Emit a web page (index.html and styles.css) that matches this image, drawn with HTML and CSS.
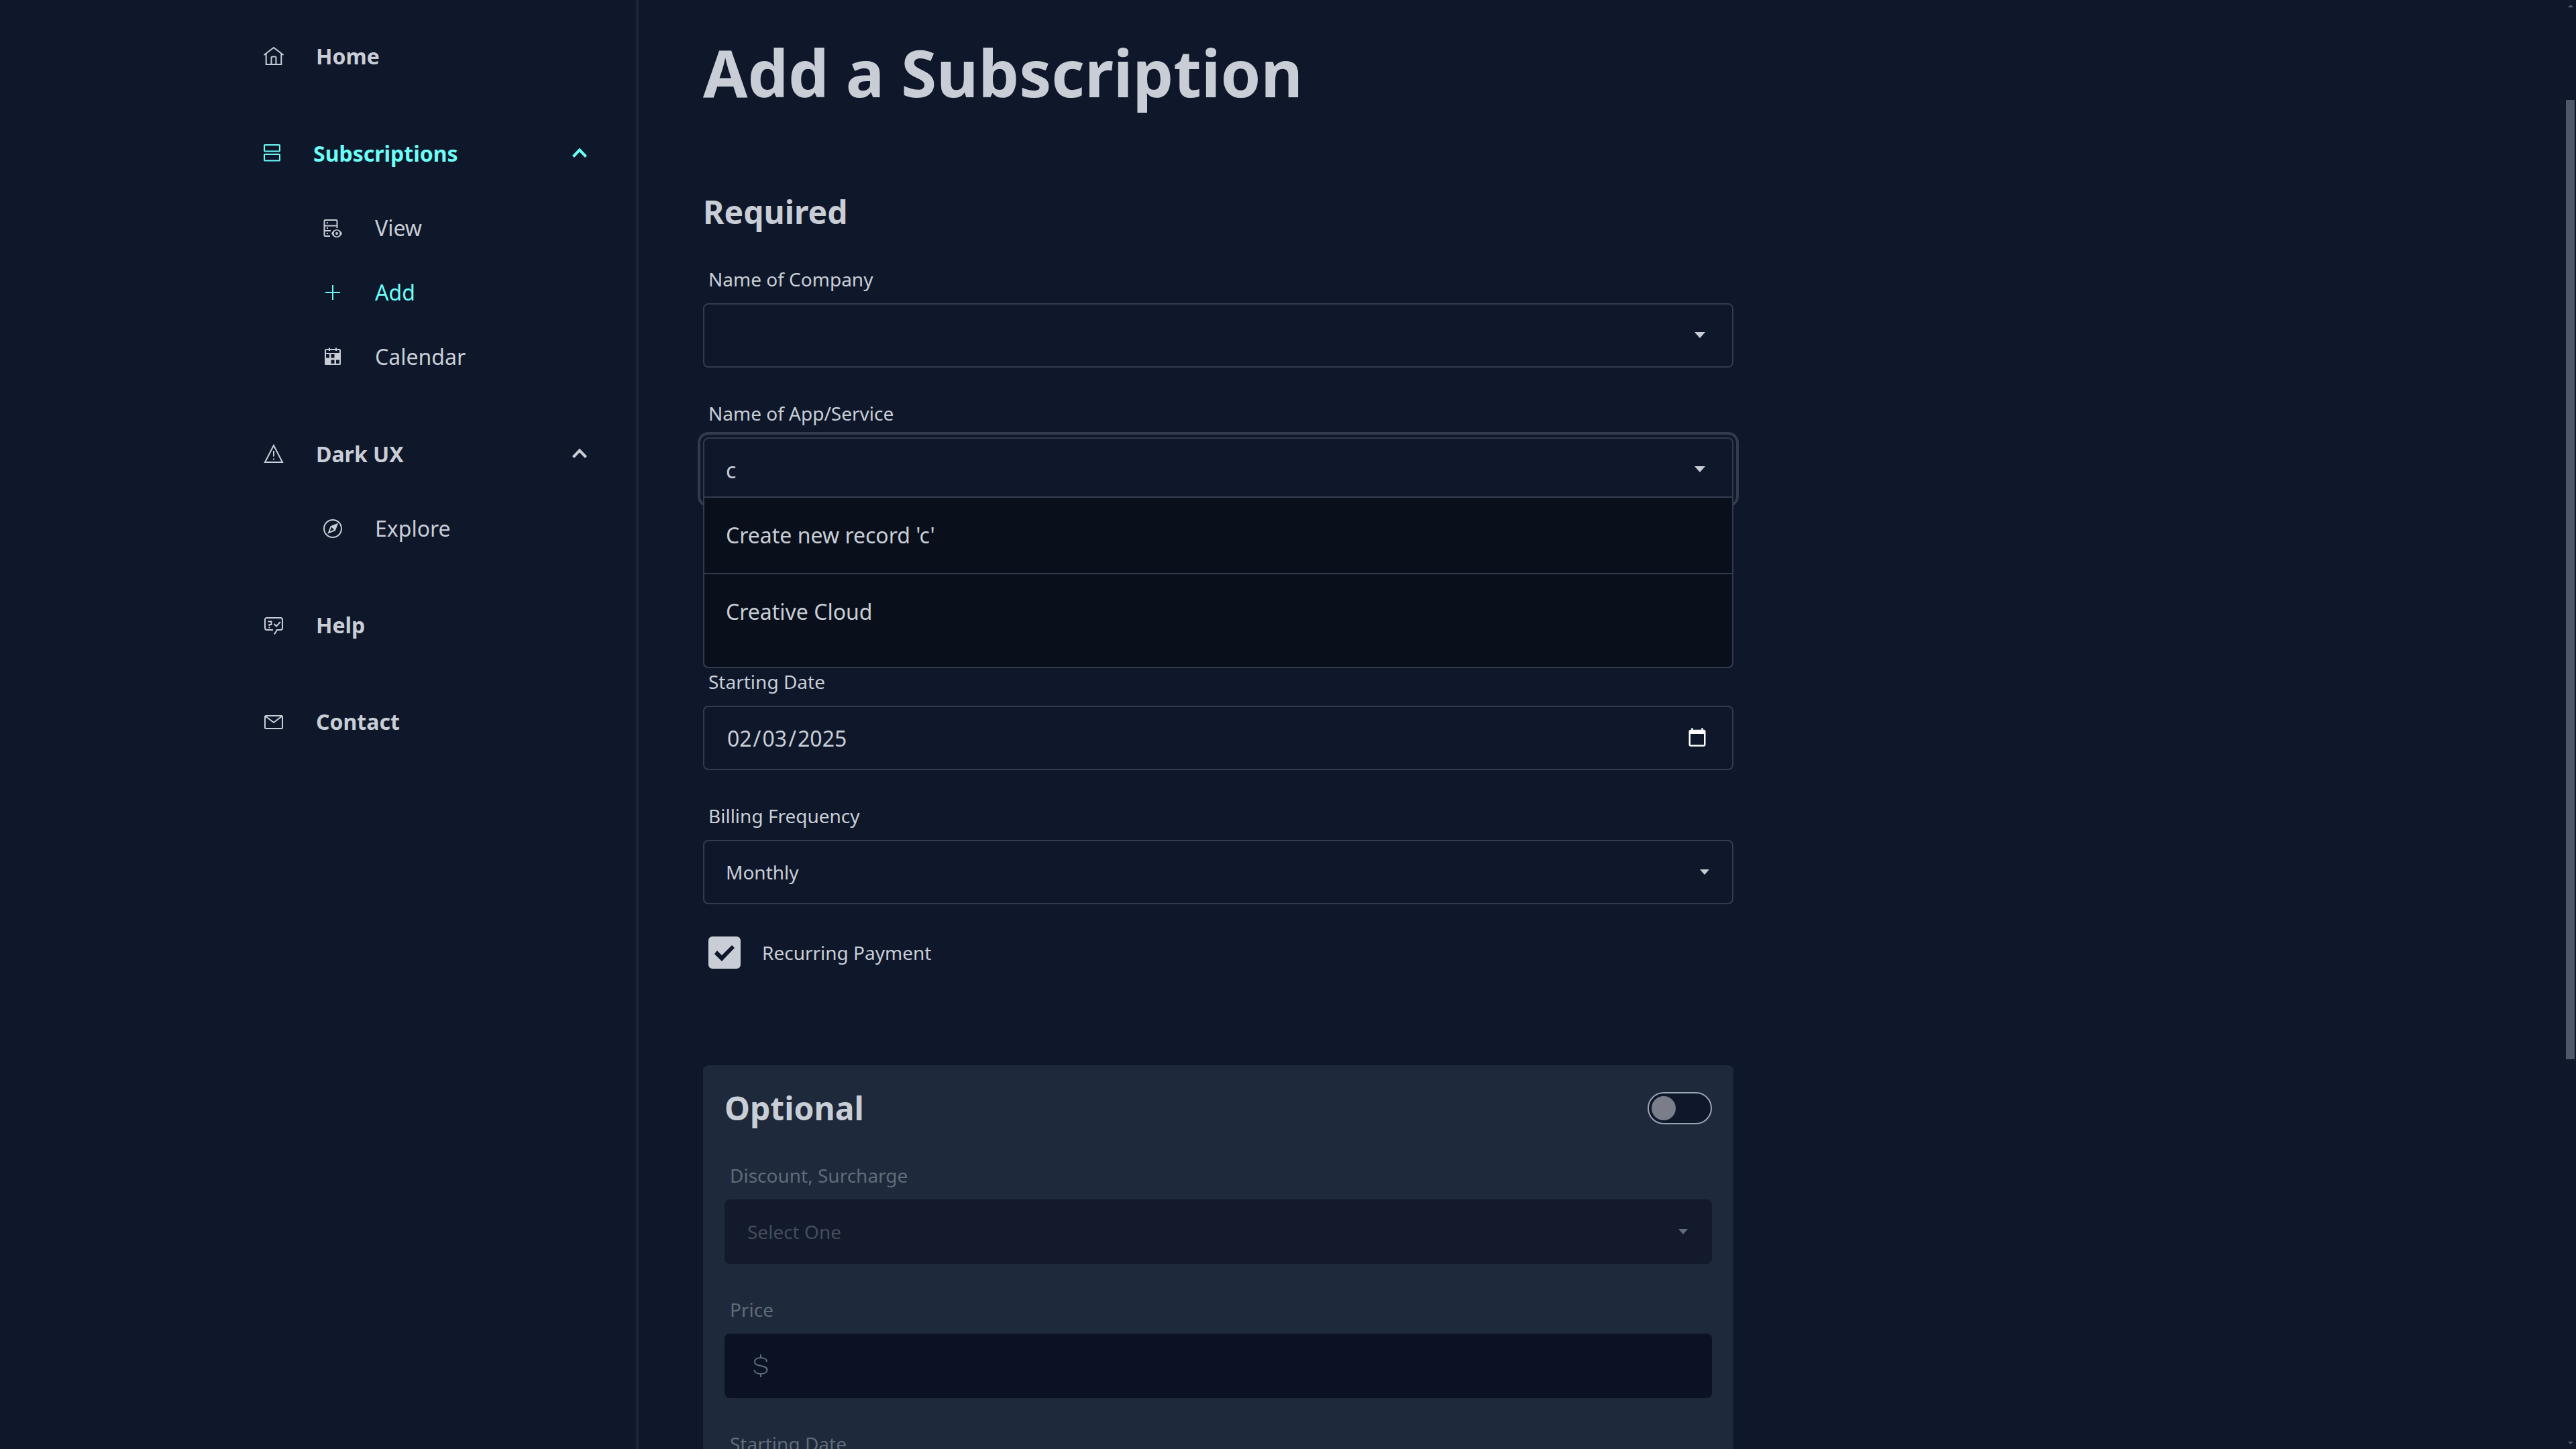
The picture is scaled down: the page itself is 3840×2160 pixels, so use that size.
FILE: index.html
```html
<!DOCTYPE html>
<html lang="en">
<head>
<meta charset="utf-8">
<meta name="viewport" content="width=device-width, initial-scale=1">
<title>Add a Subscription</title>
<link rel="stylesheet" href="styles.css">
</head>
<body>
<div class="app">
  <nav class="sidebar" aria-label="Main">
    <ul class="nav">
      <li>
        <a class="nav-item" href="#home">
          <svg class="icon" viewBox="0 0 32 32" aria-hidden="true"><path d="M1.5 14 16 3l14.500 11M4.700 12v16H27.300V12M12.500 28V18q0-1.500 1.500-1.500h4q1.500 0 1.500 1.500v10"/></svg>
          <span>Home</span>
        </a>
      </li>
      <li>
        <button class="nav-item active" type="button" aria-expanded="true">
          <svg class="icon icon-small" viewBox="0 0 28 28" aria-hidden="true"><rect x="2" y="2" width="23" height="9.500" rx="1"/><rect x="2" y="16" width="23" height="9.500" rx="1"/></svg>
          <span>Subscriptions</span>
          <svg class="chevron" viewBox="0 0 32 32" aria-hidden="true"><path d="m6.500 21.500 9.500-10 9.500 10"/></svg>
        </button>
        <ul class="subnav">
          <li><a class="nav-item" href="#view">
            <svg class="icon" viewBox="0 0 32 32" aria-hidden="true"><path d="M12 28H5q-1.500 0-1.500-1.500v-21Q3.500 4 5 4h16q1.500 0 1.500 1.500V16M3.500 12.500h19M3.500 20H13"/><path class="solid" d="M7 7.200h2v2H7zM7 15h2v2H7zM7 23h2v2H7z"/><path class="solid" fill-rule="evenodd" d="M14 24q3-6 8-6t8 6q-3 6-8 6t-8-6Zm3.500 0a4.500 4.500 0 0 0 9 0 4.500 4.500 0 0 0-9 0Zm2.500 0a2 2 0 0 1 4 0 2 2 0 0 1-4 0Z"/></svg>
            <span>View</span></a></li>
          <li><a class="nav-item active" href="#add" aria-current="page">
            <svg class="icon" viewBox="0 0 32 32" aria-hidden="true"><path d="M16 5v22M5 16h22"/></svg>
            <span>Add</span></a></li>
          <li><a class="nav-item" href="#calendar">
            <svg class="icon" viewBox="0 0 32 32" aria-hidden="true"><path d="M11 2.500V7M21 2.500V7M5 11V6.500Q5 5 6.500 5h19Q27 5 27 6.500V11"/><path class="solid" fill-rule="evenodd" d="M4 10h24v16.500q0 1.500-1.500 1.500h-21Q4 28 4 26.500ZM6 12v5.500h5V12Zm7.500 0v5.500h5V12Zm0 8.500V26h5v-5.500Zm7.500 0V26h5v-5.500Z"/></svg>
            <span>Calendar</span></a></li>
        </ul>
      </li>
      <li>
        <button class="nav-item" type="button" aria-expanded="true">
          <svg class="icon" viewBox="0 0 32 32" aria-hidden="true"><path d="M16 4 29 29H3ZM16 12v8.500M16 23.500v2"/></svg>
          <span>Dark UX</span>
          <svg class="chevron" viewBox="0 0 32 32" aria-hidden="true"><path d="m6.500 21.500 9.500-10 9.500 10"/></svg>
        </button>
        <ul class="subnav">
          <li><a class="nav-item" href="#explore">
            <svg class="icon" viewBox="0 0 32 32" aria-hidden="true"><circle cx="16" cy="16" r="13"/><path d="M22.500 9.500 13.500 13 10 22l9-3.500Z"/><path class="solid" d="m23 9-9.500 4 5.500 6Z"/></svg>
            <span>Explore</span></a></li>
        </ul>
      </li>
      <li>
        <a class="nav-item" href="#help">
          <svg class="icon" viewBox="0 0 32 32" aria-hidden="true"><path d="M15 23H6q-3 0-3-3V8q0-3 3-3h20q3 0 3 3v12q0 3-3 3h-5l-4 6.500"/><path d="M7.500 10.500h5v4.500h-3v2.500M9.500 19v1.500M16.500 14l3.500 3.500 6-6.500"/></svg>
          <span>Help</span>
        </a>
      </li>
      <li>
        <a class="nav-item" href="#contact">
          <svg class="icon" viewBox="0 0 32 32" aria-hidden="true"><rect x="3" y="7" width="26" height="19" rx="1.500"/><path d="m3.500 7.500 12.500 9.500 12.500-9.500"/></svg>
          <span>Contact</span>
        </a>
      </li>
    </ul>
  </nav>

  <main class="content">
    <form class="form">
      <h1 class="title">Add a Subscription</h1>

      <section class="fields">
        <h2 class="heading">Required</h2>

        <div class="field">
          <label class="label" for="company">Name of Company</label>
          <div class="control combo">
            <input class="combo-input" id="company" type="text" autocomplete="off">
            <button class="combo-toggle" type="button" aria-label="Show companies">
              <svg class="caret-large" viewBox="0 0 16 10" aria-hidden="true"><path d="M0 0h16L8 9z"/></svg>
            </button>
          </div>
        </div>

        <div class="field">
          <label class="label" for="service">Name of App/Service</label>
          <div class="control combo open">
            <input class="combo-input" id="service" type="text" value="c" autocomplete="off" role="combobox" aria-expanded="true" aria-controls="service-options">
            <button class="combo-toggle" type="button" aria-label="Show services">
              <svg class="caret-large" viewBox="0 0 16 10" aria-hidden="true"><path d="M0 0h16L8 9z"/></svg>
            </button>
            <ul class="options" id="service-options" role="listbox">
              <li class="option" role="option">Create new record 'c'</li>
              <li class="option" role="option">Creative Cloud</li>
            </ul>
          </div>
        </div>

        <div class="field covered">
          <label class="label" for="price">Price</label>
          <input class="control input" id="price" type="text">
        </div>

        <div class="field">
          <label class="label" for="start">Starting Date</label>
          <input class="control input" id="start" type="date" value="2025-02-03">
        </div>

        <div class="field">
          <label class="label" for="frequency">Billing Frequency</label>
          <div class="select-wrap">
            <select class="control select" id="frequency"><option>Monthly</option><option>Yearly</option></select>
            <svg class="caret" viewBox="0 0 14 8" aria-hidden="true"><path d="M0 0h14L7 8z"/></svg>
          </div>
        </div>

        <div class="check-row">
          <input class="check" id="recurring" type="checkbox" checked>
          <label class="check-label" for="recurring">Recurring Payment</label>
        </div>
      </section>

      <section class="fields card">
        <div class="card-head">
          <h2 class="heading" id="optional-title">Optional</h2>
          <input class="switch" type="checkbox" role="switch" aria-labelledby="optional-title">
        </div>

        <div class="field off">
          <label class="label" for="discount">Discount, Surcharge</label>
          <div class="select-wrap">
            <select class="control select" id="discount" disabled><option>Select One</option></select>
            <svg class="caret" viewBox="0 0 14 8" aria-hidden="true"><path d="M0 0h14L7 8z"/></svg>
          </div>
        </div>

        <div class="field off">
          <label class="label" for="discount-price">Price</label>
          <div class="control money">
            <svg class="dollar" viewBox="0 0 40 40" aria-hidden="true"><path d="M20 3v5M20 32v5M29 14c0-4-4-6-9-6s-9 2-9 6 3.500 5 9 6 9.500 2 9.500 6-4.500 6-9.500 6-9.500-2-9.500-6"/></svg>
            <input class="combo-input" id="discount-price" type="text" disabled>
          </div>
        </div>

        <div class="field off">
          <label class="label" for="discount-start">Starting Date</label>
          <input class="control input" id="discount-start" type="date" disabled>
        </div>
      </section>
    </form>
  </main>
</div>

<div class="scrollbar" aria-hidden="true">
  <svg class="scroll-arrow" viewBox="0 0 8 4"><path d="M0 4h8L4 0z"/></svg>
  <div class="scroll-track"><div class="scroll-thumb"></div></div>
  <svg class="scroll-arrow" viewBox="0 0 8 4"><path d="M0 0h8L4 4z"/></svg>
</div>
</body>
</html>
```
FILE: styles.css
```css
:root {
  --bg: #0f172a;
  --text: #c9ced6;
  --line: #333c4f;
  --accent: #6bfff8;
  color-scheme: dark;
}

* {
  box-sizing: border-box;
}

body {
  margin: 0;
  background: var(--bg);
  color: var(--text);
  font-family: "Noto Sans", sans-serif;
  font-size: 32px;
  line-height: 48px;
}

h1, h2, ul {
  margin: 0;
  padding: 0;
  font-weight: 700;
}

ul {
  list-style: none;
}

input, select, button {
  margin: 0;
  color: inherit;
  font-family: inherit;
}

.app {
  display: grid;
  grid-template-columns: 952px minmax(0, 1fr);
  height: 100vh;
  overflow: hidden;
}

/* Sidebar */

.sidebar {
  padding: 36px 68px 36px 392px;
  border-right: 4px solid #1c2638;
}

.nav {
  display: grid;
  gap: 48px;
}

.nav-item {
  display: flex;
  align-items: center;
  gap: 47px;
  width: 100%;
  height: 96px;
  padding: 0;
  border: 0;
  background: none;
  color: var(--text);
  font-size: 32px;
  font-weight: 700;
  text-decoration: none;
}

.nav-item.active {
  color: var(--accent);
}

.subnav {
  padding: 16px 0 0 88px;
}

.subnav .nav-item {
  font-weight: 400;
}

.icon {
  flex: none;
  width: 32px;
  height: 32px;
  fill: none;
  stroke: currentColor;
  stroke-width: 2;
}

.icon-small {
  width: 28px;
  height: 28px;
}

.icon .solid {
  fill: currentColor;
  stroke: none;
}

.chevron {
  width: 32px;
  height: 32px;
  margin-left: auto;
  fill: none;
  stroke: currentColor;
  stroke-width: 4;
}

/* Form */

.content {
  padding: 60px 96px;
}

.form {
  max-width: 1536px;
}

.title {
  margin-bottom: 128px;
  font-size: 96px;
  line-height: 96px;
}

.heading {
  font-size: 48px;
  line-height: 64px;
}

.fields {
  display: grid;
  gap: 48px;
}

.field {
  display: grid;
  gap: 16px;
}

/* Sits under the open list of options */
.covered {
  visibility: hidden;
}

.label, .check-label {
  font-size: 28px;
  line-height: 40px;
}

.label {
  padding: 0 8px;
}

.control {
  width: 100%;
  height: 96px;
  border: 2px solid var(--line);
  border-radius: 8px;
  background: var(--bg);
  font-size: 32px;
}

.input {
  padding: 0 34px 0 32px;
}

.input::-webkit-datetime-edit-month-field,
.input::-webkit-datetime-edit-day-field,
.input::-webkit-datetime-edit-year-field {
  padding: 0 2px;
}

.combo {
  position: relative;
  display: flex;
  align-items: center;
}

.combo.open {
  outline: 4px solid var(--line);
  outline-offset: 4px;
}

.combo-input {
  flex: 1;
  min-width: 0;
  padding: 0 0 0 32px;
  border: 0;
  outline: 0;
  background: none;
  font-size: 32px;
}

.combo-toggle {
  display: flex;
  align-items: center;
  justify-content: center;
  width: 96px;
  height: 92px;
  padding: 0;
  border: 0;
  background: none;
}

.caret-large {
  width: 16px;
  height: 10px;
  fill: currentColor;
}

.options {
  position: absolute;
  z-index: 2;
  top: 86px;
  left: -2px;
  right: -2px;
  padding-bottom: 26px;
  border: 2px solid var(--line);
  border-radius: 0 0 8px 8px;
  background: #09101c;
  font-weight: 400;
}

.option {
  padding: 32px;
}

.option + .option {
  border-top: 2px solid var(--line);
}

.select-wrap {
  display: grid;
  align-items: center;
}

.select-wrap > * {
  grid-area: 1 / 1;
}

.select {
  appearance: none;
  padding: 0 32px;
  font-size: 28px;
}

.caret {
  justify-self: end;
  width: 14px;
  height: 8px;
  margin-right: 36px;
  fill: currentColor;
  pointer-events: none;
}

.check-row {
  display: flex;
  align-items: center;
  gap: 32px;
  padding: 0 8px;
}

.check {
  appearance: none;
  width: 48px;
  height: 48px;
  border-radius: 6px;
  background: var(--text);
}

.check:checked::before {
  content: "";
  display: block;
  width: 48px;
  height: 48px;
  background: var(--bg);
  clip-path: polygon(9px 26px, 13px 21px, 20px 28px, 35px 13px, 39px 17px, 20px 37px);
}

/* Optional card */

.card {
  margin-top: 144px;
  padding: 32px;
  border-radius: 8px;
  background: #1e293b;
}

.card-head {
  display: flex;
  align-items: center;
  justify-content: space-between;
}

.switch {
  appearance: none;
  width: 96px;
  height: 48px;
  padding: 4px;
  border: 2px solid #9aa3b2;
  border-radius: 24px;
  background: var(--bg);
}

.switch::before {
  content: "";
  display: block;
  width: 36px;
  height: 36px;
  border-radius: 50%;
  background: #7a7e8b;
}

.off {
  color: #626b7a;
}

.off .control {
  border-color: transparent;
}

.off .select {
  background: #131a2b;
  color: #454d5d;
  opacity: 1;
}

.off .money {
  display: flex;
  align-items: center;
  padding-left: 32px;
  background: #0b1224;
}

.dollar {
  width: 40px;
  height: 40px;
  fill: none;
  stroke: currentColor;
  stroke-width: 2;
}

/* Page scrollbar */

.scrollbar {
  position: fixed;
  top: 0;
  right: 2px;
  bottom: 0;
  display: flex;
  flex-direction: column;
  align-items: center;
  width: 13px;
  padding: 7px 0;
}

.scroll-arrow {
  width: 8px;
  height: 4px;
  fill: #566071;
}

.scroll-track {
  flex: 1;
  width: 100%;
  padding-top: 138px;
}

.scroll-thumb {
  height: calc(72% - 10px);
  background: #4d5766;
}
```
